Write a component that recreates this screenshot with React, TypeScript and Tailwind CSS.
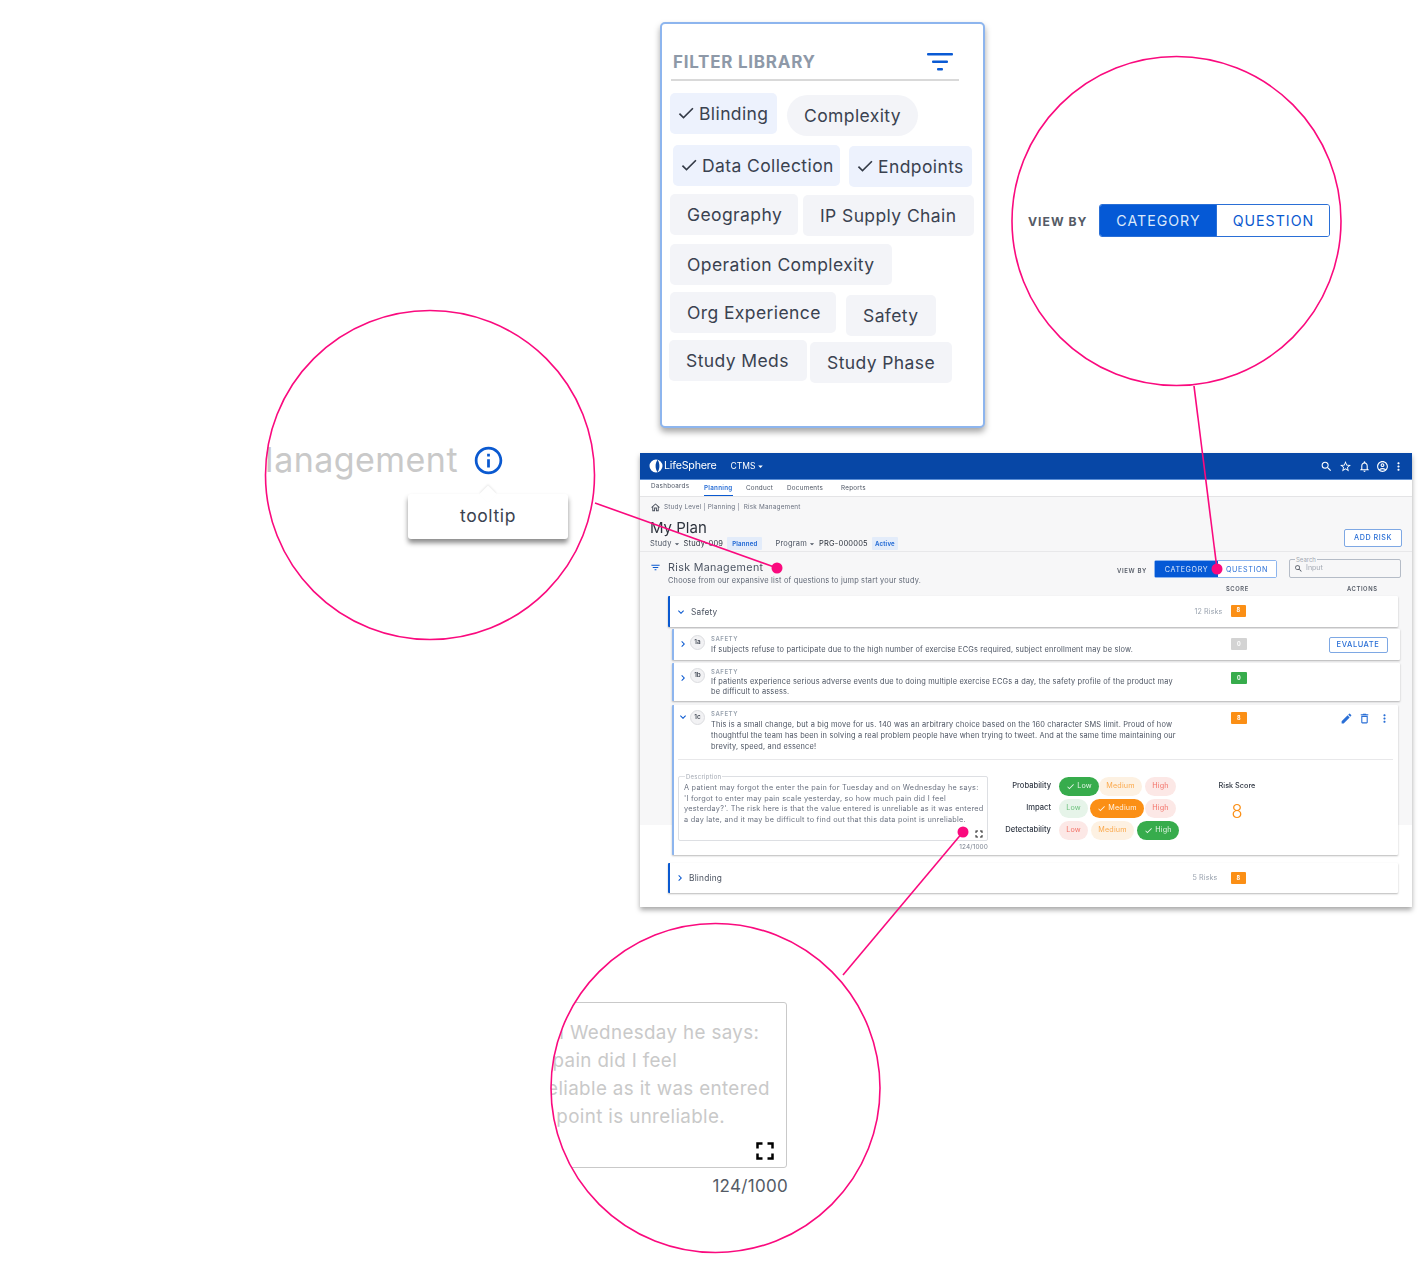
import React from "react";
import {
  MdSearch, MdStarBorder, MdNotificationsNone, MdOutlineAccountCircle, MdMoreVert, MdFilterList,
  MdOutlineHome, MdCheck, MdEdit, MdOutlineDelete, MdFullscreen, MdChevronRight, MdExpandMore,
  MdInfoOutline, MdArrowDropDown,
} from "react-icons/md";

function Chip({ label, w, checked, mt = 0, ml = 0, round }: { label: string; w: number; checked?: boolean; mt?: number; ml?: number; round?: boolean }) {
  return (
    <div
      className={`flex h-[41px] shrink-0 items-center pt-[2px] text-[17.5px] tracking-[0.4px] text-[#3a4250] ${checked ? "bg-[#edf2fd] pl-[6px]" : "bg-[#f3f4f8] pl-[17px]"} ${round ? "rounded-full" : "rounded-[5px]"}`}
      style={{ width: w, marginTop: mt, marginLeft: ml }}
    >
      {checked && <MdCheck className="-mt-[3px] mr-[3px] h-[20px] w-[20px] text-[#333a46]" />}
      {label}
    </div>
  );
}

function Badge({ value, color }: { value: string; color: string }) {
  return (
    <div className={`flex h-[12px] w-[15.5px] items-center justify-center rounded-[1px] text-[5.5px] font-bold text-white ${color}`}>{value}</div>
  );
}

function Num({ t }: { t: string }) {
  return (
    <div className="flex h-[15px] w-[15px] items-center justify-center rounded-full border border-[#dcdde0] bg-[#f2f2f4] text-[6.3px] font-semibold text-[#444b57]">{t}</div>
  );
}

function Pill({ label, w, kind, ml = 0 }: { label: string; w: number; kind: "green" | "orange" | "lg" | "lo" | "lr"; ml?: number }) {
  const cls = {
    green: "bg-[#37ac4c] text-[#e4f4e7]",
    orange: "bg-[#fb8f15] text-[#fff3e4]",
    lg: "bg-[#e6f4e9] text-[#6cc27c]",
    lo: "bg-[#fdf1e2] text-[#fba94c]",
    lr: "bg-[#fce8e6] text-[#f37369]",
  }[kind];
  return (
    <div className={`flex h-[19px] shrink-0 items-center justify-center rounded-full text-[7.2px] tracking-[0.15px] ${cls}`} style={{ width: w, marginLeft: ml }}>
      {(kind === "green" || kind === "orange") && <MdCheck className="mr-[2px] h-[9px] w-[9px]" />}
      {label}
    </div>
  );
}

export default function App() {
  return (
    <div className="relative h-[1271px] w-[1427px] overflow-hidden bg-white [font-family:Inter,sans-serif]">
      {/* Filter library card */}
      <div className="absolute left-[660px] top-[22px] h-[406px] w-[325px] rounded-[5px] border-2 border-[#8db5ee] bg-white pl-[8px] shadow-[0_4px_6px_rgba(0,0,0,0.35)]">
        <div className="ml-[1px] mt-[20px] flex h-[37px] w-[288px] items-start justify-between border-b-2 border-[#d9d9d9]">
          <span className="ml-[2px] mt-[6px] text-[17px] font-bold tracking-[0.75px] text-[#8e99a8]">FILTER LIBRARY</span>
          <svg viewBox="0 0 26 18" className="mr-[6px] mt-[9px] h-[18px] w-[26px]" fill="#0a5ad4">
            <rect x="0" y="0" width="26" height="2.5" rx="1" />
            <rect x="5" y="7.5" width="16" height="2.5" rx="1" />
            <rect x="10" y="15" width="6" height="2.5" rx="1" />
          </svg>
        </div>
        <div className="mt-[12px] flex items-start"><Chip label="Blinding" w={107} checked /><Chip label="Complexity" w={131} ml={10} mt={2} round /></div>
        <div className="mt-[9px] flex items-start pl-[3px]"><Chip label="Data Collection" w={167} checked /><Chip label="Endpoints" w={123} ml={9} mt={1} checked /></div>
        <div className="mt-[7px] flex items-start"><Chip label="Geography" w={128} /><Chip label="IP Supply Chain" w={171} ml={5} mt={1} /></div>
        <div className="mt-[8px] flex items-start"><Chip label="Operation Complexity" w={222} /></div>
        <div className="mt-[7px] flex items-start"><Chip label="Org Experience" w={166} /><Chip label="Safety" w={90} ml={10} mt={3} /></div>
        <div className="mt-[4px] flex items-start"><Chip label="Study Meds" w={138} ml={-1} /><Chip label="Study Phase" w={142} ml={3} mt={2} /></div>
      </div>

      {/* App window */}
      <div className="absolute left-[640px] top-[453px] h-[454px] w-[772px] bg-white shadow-[0_3px_5px_rgba(0,0,0,0.35)] blur-[0.3px]">
        <div className="flex h-[27px] items-center border-b border-[#5c8fd6] bg-[#0747a6] pl-[9px] pr-[7px] text-white">
          <svg viewBox="0 0 14 14" className="h-[14px] w-[14px]" fill="white" fillRule="evenodd">
            <path d="M7 .5a6.5 6.5 0 1 1 0 13 6.5 6.5 0 0 1 0-13zM8.6.7C7.2 2.6 6.6 4.7 6.6 7s.6 4.4 2 6.3c1.2-1.9 1.8-4 1.8-6.3S9.8 2.6 8.6.7z" />
          </svg>
          <span className="ml-[1px] text-[10.7px] tracking-[-0.2px]">LifeSphere</span>
          <span className="ml-[14px] text-[8.5px]">CTMS</span>
          <MdArrowDropDown className="h-[11px] w-[11px]" />
          <div className="ml-auto flex items-center gap-[6px]">
            <MdSearch className="h-[13px] w-[13px]" />
            <MdStarBorder className="h-[13px] w-[13px]" />
            <MdNotificationsNone className="h-[13px] w-[13px]" />
            <MdOutlineAccountCircle className="-ml-[1px] h-[13px] w-[13px]" />
            <MdMoreVert className="-ml-[3px] h-[13px] w-[13px]" />
          </div>
        </div>
        <div className="flex h-[17px] border-b border-[#e4e4e6] pl-[11px] text-[6.3px] tracking-[0.25px] text-[#4b5361]">
          <span className="mt-[2px] w-[53px]">Dashboards</span>
          <span className="h-[16px] w-[29px] border-b border-[#0a59d0] pt-[4px] font-semibold text-[#2a6fd6]">Planning</span>
          <span className="ml-[13px] w-[41px] pt-[4px]">Conduct</span>
          <span className="w-[54px] pt-[4px]">Documents</span>
          <span className="pt-[4px]">Reports</span>
        </div>
        <div className="h-[410px] bg-[linear-gradient(#f7f7f8_328px,#ffffff_328px)]">
          <div className="flex h-[20px] items-center pl-[10px] pt-[1px] text-[6.4px] tracking-[0.2px] text-[#6b7280]">
            <MdOutlineHome className="mr-[3px] h-[11px] w-[11px] text-[#444b57]" />
            <span>Study Level | Planning |&nbsp; Risk Management</span>
          </div>
          <div className="flex h-[35px] justify-between border-b border-[#e8e8ea] pl-[10px] pr-[10px]">
            <div>
              <div className="h-[20px] text-[15px] leading-[22px] text-[#2d333d]">My Plan</div>
              <div className="flex h-[13px] items-center text-[7.5px] tracking-[0.2px] text-[#4b5361]">
                <span>Study</span><MdArrowDropDown className="h-[10px] w-[10px]" />
                <span className="ml-[2px] text-[#2d333d]">Study-009</span>
                <span className="ml-[4px] rounded-[1px] bg-[#e3ecfa] px-[5px] py-[3px] text-[6px] font-bold leading-[7px] text-[#2a6fd6]">Planned</span>
                <span className="ml-[13px]">Program</span><MdArrowDropDown className="h-[10px] w-[10px]" />
                <span className="ml-[2px] text-[#2d333d]">PRG-000005</span>
                <span className="ml-[4px] rounded-[1px] bg-[#e3ecfa] px-[3px] py-[3px] text-[6px] font-bold leading-[7px] text-[#2a6fd6]">Active</span>
              </div>
            </div>
            <div className="mt-[12px] flex h-[18px] w-[58px] items-center justify-center rounded-[2px] border border-[#7ea8e4] bg-white text-[7.2px] font-medium tracking-[0.55px] text-[#2a6fd6]">ADD RISK</div>
          </div>
          <div className="flex h-[34px] justify-between pl-[10px] pr-[11px]">
            <div className="flex">
              <MdFilterList className="mt-[10px] h-[11px] w-[11px] text-[#0a59d0]" />
              <div className="ml-[7px] mt-[9px]">
                <div className="text-[10.7px] leading-[14px] tracking-[0.35px] text-[#4b5361]">Risk Management</div>
                <div className="mt-[1px] text-[7.4px] leading-[10px] tracking-[0.18px] text-[#5f6775]">Choose from our expansive list of questions to jump start your study.</div>
              </div>
            </div>
            <div className="mt-[7px] flex items-start">
              <span className="mt-[7px] text-[6px] font-semibold tracking-[0.65px] text-[#555b66]">VIEW BY</span>
              <div className="ml-[7px] mt-[1px] flex h-[18px] w-[123px] rounded-[2px] border border-[#8db5ee] text-[7.2px] tracking-[0.6px]">
                <span className="flex w-[63px] items-center justify-center bg-[#0559d6] pt-[2px] text-[#dbe8fb]">CATEGORY</span>
                <span className="flex flex-1 items-center justify-center bg-white pt-[2px] text-[#2a6fd6]">QUESTION</span>
              </div>
              <div className="relative ml-[12px] flex h-[19px] w-[112px] items-center rounded-[2px] border border-[#b5bcc7] pl-[4px] text-[7px] text-[#a3a9b3]">
                <span className="absolute -top-[4px] left-[5px] bg-[#f7f7f8] px-[1px] text-[6px] leading-[7px]">Search</span>
                <MdSearch className="h-[9px] w-[9px] text-[#444b57]" />
                <span className="ml-[3px]">Input</span>
              </div>
            </div>
          </div>
          <div className="flex h-[10px] items-start pl-[586px] text-[5.8px] font-semibold leading-[6px] tracking-[0.6px] text-[#555b66]">
            <span className="w-[121px]">SCORE</span><span>ACTIONS</span>
          </div>

          <div className="ml-[28px] flex h-[31px] w-[730px] items-center rounded-[1px] border-l-[2.5px] border-[#0a59d0] bg-white pl-[5px] shadow-[0_1px_2px_rgba(0,0,0,0.28)]">
            <MdExpandMore className="h-[12px] w-[12px] text-[#0a59d0]" />
            <span className="ml-[4px] mt-[2px] text-[8.3px] tracking-[0.2px] text-[#4b5361]">Safety</span>
            <span className="ml-auto mt-[1px] text-[7.2px] tracking-[0.1px] text-[#9aa3af]">12 Risks</span>
            <div className="ml-[8px] mr-[152px] -mt-[2px]"><Badge value="8" color="bg-[#fb8f15]" /></div>
          </div>

          <div className="ml-[32px] mt-[2px] flex h-[31px] w-[728px] items-start rounded-[1px] border-l-2 border-[#8db5ee] bg-white pl-[6px] shadow-[0_1px_2px_rgba(0,0,0,0.28)]">
            <MdChevronRight className="-ml-[3.5px] mt-[9px] h-[12px] w-[12px] text-[#0a59d0]" />
            <div className="ml-[1.5px] mt-[6px]"><Num t="1a" /></div>
            <div className="ml-[6px] mt-[6px] w-[515px]">
              <div className="text-[6px] font-semibold leading-[7px] tracking-[0.55px] text-[#9aa3af]">SAFETY</div>
              <div className="mt-[3px] whitespace-nowrap text-[7.4px] leading-[10px] tracking-[0.18px] text-[#4b5361]">If subjects refuse to participate due to the high number of exercise ECGs required, subject enrollment may be slow.</div>
            </div>
            <div className="ml-[5px] mt-[9px]"><Badge value="0" color="bg-[#d3d3d3]" /></div>
            <div className="ml-[82px] mt-[8px] flex h-[16px] w-[59px] items-center justify-center rounded-[2px] border border-[#7ea8e4] text-[7.5px] font-medium tracking-[0.55px] text-[#2a6fd6]">EVALUATE</div>
          </div>

          <div className="ml-[32px] mt-[3px] flex h-[38px] w-[728px] items-start rounded-[1px] border-l-2 border-[#8db5ee] bg-white pl-[6px] shadow-[0_1px_2px_rgba(0,0,0,0.28)]">
            <MdChevronRight className="-ml-[3.5px] mt-[9px] h-[12px] w-[12px] text-[#0a59d0]" />
            <div className="ml-[1.5px] mt-[5px]"><Num t="1b" /></div>
            <div className="ml-[6px] mt-[5px] w-[515px]">
              <div className="text-[6px] font-semibold leading-[7px] tracking-[0.55px] text-[#9aa3af]">SAFETY</div>
              <div className="mt-[2px] w-[470px] text-[7.4px] leading-[10px] tracking-[0.18px] text-[#4b5361]">If patients experience serious adverse events due to doing multiple exercise ECGs a day, the safety profile of the product may be difficult to assess.</div>
            </div>
            <div className="ml-[5px] mt-[9px]"><Badge value="0" color="bg-[#37ac4c]" /></div>
          </div>

          <div className="ml-[32px] mt-[4px] h-[150px] w-[726px] rounded-[1px] border-l-2 border-[#8db5ee] bg-white pl-[4px] pr-[5px] shadow-[0_1px_2px_rgba(0,0,0,0.28)]">
            <div className="flex h-[55px] items-start border-b border-[#e8e8ea]">
              <MdExpandMore className="-ml-[1px] mt-[6px] h-[12px] w-[12px] text-[#0a59d0]" />
              <div className="ml-[1px] mt-[5px]"><Num t="1c" /></div>
              <div className="ml-[6px] mt-[5px] w-[515px]">
                <div className="text-[6px] font-semibold leading-[7px] tracking-[0.55px] text-[#9aa3af]">SAFETY</div>
                <div className="mt-[3px] w-[470px] text-[7.4px] leading-[10.8px] tracking-[0.18px] text-[#4b5361]">This is a small change, but a big move for us. 140 was an arbitrary choice based on the 160 character SMS limit. Proud of how thoughtful the team has been in solving a real problem people have when trying to tweet. And at the same time maintaining our brevity, speed, and essence!</div>
              </div>
              <div className="ml-[5px] mt-[7px]"><Badge value="8" color="bg-[#fb8f15]" /></div>
              <div className="ml-[93px] mt-[7px] flex items-center text-[#2a6fd6]">
                <MdEdit className="h-[13px] w-[13px]" />
                <MdOutlineDelete className="ml-[5px] h-[13px] w-[13px]" />
                <MdMoreVert className="ml-[7px] h-[13px] w-[13px]" />
              </div>
            </div>
            <div className="flex">
              <div className="mt-[16px] w-[310px]">
                <div className="relative h-[65px] rounded-[2px] border border-[#dddfe3] pl-[5px] pt-[6px] text-[7.3px] leading-[10.6px] tracking-[0.26px] text-[#6b7280]">
                  <span className="absolute -top-[4px] left-[6px] bg-white px-[1px] text-[6px] leading-[7px] text-[#a3a9b3]">Description</span>
                  <div className="whitespace-nowrap">A patient may forgot the enter the pain for Tuesday and on Wednesday he says:<br />'I forgot to enter may pain scale yesterday, so how much pain did I feel<br />yesterday?'. The risk here is that the value entered is unreliable as it was entered<br />a day late, and it may be difficult to find out that this data point is unreliable.</div>
                  <MdFullscreen className="absolute bottom-[0px] right-[2px] h-[12px] w-[12px] text-[#222]" />
                </div>
                <div className="mt-[2px] text-right text-[6.5px] tracking-[0.1px] text-[#7b8390]">124/1000</div>
              </div>
              <div className="ml-[14px] mt-[15px] flex w-[49px] flex-col items-end whitespace-nowrap text-[7.6px] font-medium text-[#333a46]">
                <div className="flex h-[22px] items-center">Probability</div>
                <div className="flex h-[22px] items-center">Impact</div>
                <div className="flex h-[22px] items-center">Detectability</div>
              </div>
              <div className="ml-[8px] mt-[17px] flex w-[127px] flex-col gap-[3px]">
                <div className="flex"><Pill label="Low" w={40} kind="green" /><Pill label="Medium" w={43} kind="lo" /><Pill label="High" w={31} kind="lr" ml={3} /></div>
                <div className="flex"><Pill label="Low" w={29} kind="lg" /><Pill label="Medium" w={54} kind="orange" ml={2} /><Pill label="High" w={31} kind="lr" ml={1} /></div>
                <div className="flex"><Pill label="Low" w={29} kind="lr" /><Pill label="Medium" w={43} kind="lo" ml={3} /><Pill label="High" w={42} kind="green" ml={3} /></div>
              </div>
              <div className="ml-[32px] mt-[21px] flex w-[38px] flex-col items-center">
                <div className="whitespace-nowrap text-[7.3px] font-medium leading-[10px] text-[#333a46]">Risk Score</div>
                <div className="mt-[10px] text-[18px] font-light leading-[22px] text-[#fb8f15]">8</div>
              </div>
            </div>
          </div>

          <div className="ml-[28px] mt-[8px] flex h-[30px] w-[730px] items-center rounded-[1px] border-l-[2.5px] border-[#0a59d0] bg-white pl-[4px] shadow-[0_1px_2px_rgba(0,0,0,0.28)]">
            <MdChevronRight className="h-[12px] w-[12px] text-[#0a59d0]" />
            <span className="ml-[3px] text-[8.3px] tracking-[0.2px] text-[#4b5361]">Blinding</span>
            <span className="ml-auto text-[7.2px] tracking-[0.1px] text-[#9aa3af]">5 Risks</span>
            <div className="ml-[13px] mr-[152px]"><Badge value="8" color="bg-[#fb8f15]" /></div>
          </div>
        </div>
      </div>

      {/* Lens: tooltip */}
      <div className="absolute left-[265px] top-[310px] h-[330px] w-[330px] overflow-hidden rounded-full bg-white">
        <div className="ml-[-22px] mt-[128px] flex items-center">
          <span className="whitespace-nowrap text-[34px] leading-[44px] tracking-[0.45px] text-[#c9c9c9]">Management</span>
          <MdInfoOutline className="ml-[14px] h-[33px] w-[33px] text-[#0a59d0]" />
        </div>
        <div className="relative ml-[143px] mt-[12px] flex h-[45px] w-[160px] items-center justify-center rounded-[3px] bg-white text-[17.5px] tracking-[0.6px] text-[#3a4250] shadow-[0_4px_5px_rgba(0,0,0,0.45)]">
          tooltip
          <div className="absolute -top-[6px] left-[74px] h-[12px] w-[12px] rotate-45 bg-white shadow-[-1px_-1px_2px_rgba(0,0,0,0.08)]" />
        </div>
      </div>

      {/* Lens: view by */}
      <div className="absolute left-[1012px] top-[56px] flex h-[330px] w-[329px] items-center overflow-hidden rounded-full bg-white pl-[16px]">
        <span className="mt-[3px] text-[12.2px] font-bold tracking-[1px] text-[#555b66]">VIEW BY</span>
        <div className="-mt-[1px] ml-[12px] flex h-[33px] w-[231px] overflow-hidden rounded-[3px] border border-[#2a6fd6] text-[14.2px] tracking-[1px]">
          <span className="flex w-[116px] items-center justify-center bg-[#0559d6] text-[#dbe8fb]">CATEGORY</span>
          <span className="flex flex-1 items-center justify-center border-l border-[#2a6fd6] bg-white text-[#0a59d0]">QUESTION</span>
        </div>
      </div>

      {/* Lens: description */}
      <div className="absolute left-[551px] top-[923px] h-[330px] w-[329px] overflow-hidden rounded-full bg-white">
        <div className="relative ml-[-20px] mt-[79px] h-[166px] w-[256px] rounded-[3px] border-[1.5px] border-[#c9c9c9] pt-[16px] text-[18.8px] leading-[28px] text-[#c9c9c9]">
          <div className="ml-[-507px] whitespace-nowrap tracking-[0.36px]">A patient may forgot the enter the pain for Tuesday and on Wednesday he says:<br />'I forgot to enter may pain scale yesterday, so how much pain did I feel<br />yesterday?'. The risk here is that the value entered is unreliable as it was entered<br />a day late, and it may be difficult to find out that this data point is unreliable.</div>
          <MdFullscreen className="absolute bottom-[1px] right-[6px] h-[30px] w-[30px] text-black" />
        </div>
        <div className="ml-[-20px] mt-[7px] w-[257px] text-right text-[17px] leading-[22px] tracking-[0.3px] text-[#555b66]">124/1000</div>
      </div>

      {/* Annotation lines and lens rings */}
      <svg className="pointer-events-none absolute left-0 top-0 h-[1271px] w-[1427px]" viewBox="0 0 1427 1271" fill="none" stroke="#fa0a7e" strokeWidth="1.6">
        <circle cx="430" cy="475" r="164.5" />
        <circle cx="1176.5" cy="221" r="164.5" />
        <circle cx="715.5" cy="1088" r="164.5" />
        <line x1="595" y1="503" x2="777" y2="568" />
        <line x1="1194" y1="386" x2="1217" y2="569" />
        <line x1="843" y1="975" x2="963" y2="832" />
        <circle cx="777" cy="568" r="5.5" fill="#fa0a7e" stroke="none" />
        <circle cx="1217" cy="569" r="5.5" fill="#fa0a7e" stroke="none" />
        <circle cx="963" cy="832" r="5.5" fill="#fa0a7e" stroke="none" />
      </svg>
    </div>
  );
}
